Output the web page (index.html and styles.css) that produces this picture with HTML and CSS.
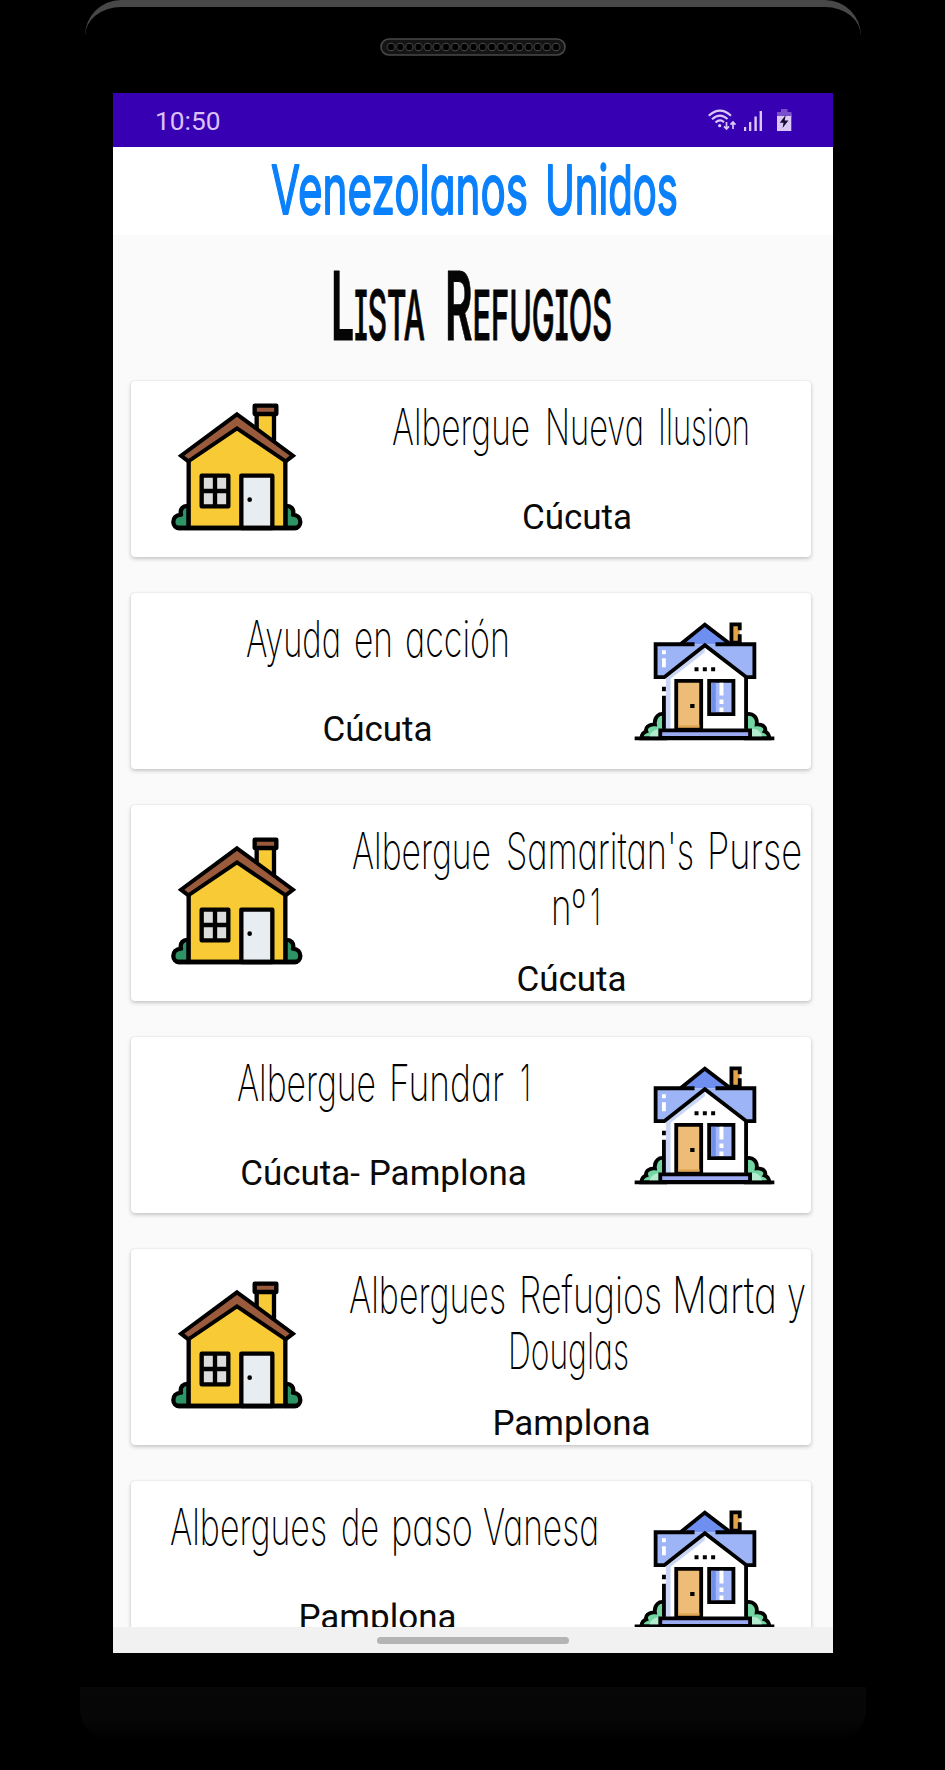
FILE: index.html
```html
<!DOCTYPE html>
<html lang="es">
<head>
<meta charset="utf-8">
<title>Venezolanos Unidos</title>
<link rel="stylesheet" href="styles.css">
</head>
<body>
<svg class="defs" width="0" height="0">
  <symbol id="house-yellow" viewBox="30 35 400 390">
    <g stroke="#000" stroke-width="13" stroke-linejoin="round" stroke-linecap="round">
      <path fill="#2f9465" d="M85 347C68 345 58 356 62 373C46 374 39 384 39 395C39 406 47 413 56 413H85ZM375 347C392 345 402 356 398 373C412 374 420 384 420 395C420 406 412 413 403 413H375Z"/>
      <path fill="#f7ca36" d="M289 70H341V170H289Z"/>
      <path fill="#f7ca36" d="M85 200L230 105L375 200V413H85Z"/>
      <path fill="#9a5a3c" d="M283 46H348V71H283Z"/>
      <path fill="#9a5a3c" stroke-width="12" stroke-linejoin="miter" d="M230 72L398 196L376 213L230 114L84 213L62 196Z"/>
      <path fill="#dcdcdc" d="M124 256H204V348H124ZM164 256V348M124 302H204"/>
      <path fill="#e8edf2" d="M243 256H336V413H243Z"/>
      <path fill="none" d="M52 413H408"/>
    </g>
    <circle cx="268" cy="328" r="7"/>
  </symbol>
  <symbol id="house-blue" viewBox="25 30 430 365">
    <g stroke="#000" stroke-width="11.5">
      <path fill="#72d6a2" d="M122 313C104 307 88 320 91 343C72 341 61 354 65 364C55 367 51 375 50 385H122ZM365 313C386 307 400 322 397 343C416 341 427 354 421 364C431 367 434 375 435 385H365Z"/>
      <path fill="#b5ecd0" stroke="none" d="M75 380C77 366 91 357 108 356V380ZM383 356C400 356 411 366 413 380H383Z"/>
      <path fill="#fff" stroke="none" d="M122 200L241 104L365 200V356H122Z"/>
      <path fill="#c9d6f5" stroke="none" d="M124 200L241 110V126L138 206V356H124Z"/>
      <path fill="#e3a348" d="M346 60V42H321V97H346V72"/>
      <path fill="#6f8ff0" d="M168 102L241 43L318 102" />
      <path fill="#9db5f6" stroke="none" d="M93 102H390V200H366L241 104L118 200H93Z"/>
      <path fill="none" d="M210 102H93V201H119L241 105L366 201H390V102H273"/>
      <path fill="none" d="M365 200V356M118 230V243M118 257V356"/>
      <path stroke="#fff" d="M118 120V132M118 144V171"/>
      <path fill="#edbd77" d="M155 212H230V358H155Z"/>
      <path stroke="#e0a550" stroke-width="7" d="M161 349H225"/>
      <path fill="#a6b9f8" d="M254 212H327V312H254Z"/>
      <path stroke="#7190ee" stroke-width="14" d="M267 218V306"/>
      <path stroke="#fff" stroke-width="12" d="M291 218V256M291 268V282M291 292V306"/>
      <path fill="#9caaf3" d="M107 361H377V384H107Z"/>
      <path d="M30 385H450"/>
      <path stroke-width="12" d="M210 177H222M235 177H247M260 177H272M197 288H210"/>
    </g>
  </symbol>
</svg>

<div class="phone">
  <div class="bezel">
    <svg class="speaker" width="186" height="18" viewBox="0 0 186 18">
      <defs><pattern id="hole" x="6.4" y="0" width="9.17" height="18" patternUnits="userSpaceOnUse"><circle cx="4.6" cy="9" r="3.7" fill="#000" stroke="#484848" stroke-width="1"/></pattern></defs>
      <rect x="1" y="1" width="184" height="16" rx="8" fill="#141414" stroke="#484848" stroke-width="1.6"/>
      <rect x="6.4" y="0" width="174.2" height="18" fill="url(#hole)"/>
    </svg>
  </div>
  <div class="screen">
    <div class="status">
      <span class="time">10:50</span>
      <span class="indicators">
        <svg class="wifi" width="28" height="22" viewBox="0 0 28 22" fill="none" stroke="#dcc8f7" stroke-width="2.2"><path d="M.8 6.8Q12 -3.4 23 6.8M4 10.2Q12 3 19.5 10M7.5 13.5Q12 9.6 16 13.2"/><circle cx="11.7" cy="16.7" r="1.6" fill="#dcc8f7" stroke="none"/><path d="M18.5 13V20M16 17.3L18.5 20L21 17.3M25 20V13M22.5 15.7L25 13L27.5 15.7" stroke-width="1.7"/></svg>
        <svg class="signal" width="19" height="20" viewBox="0 0 19 20" fill="#dcc8f7"><path d="M0 16H2.2V20H0ZM5 11H7.3V20H5ZM10.4 5.5H12.8V20H10.4ZM15.6 0H18V20H15.6Z"/></svg>
        <svg width="15" height="22" viewBox="0 0 15 22"><path fill="#7950cb" d="M4 0H10.5V3H14.3V8H0V3H4Z"/><path fill="#dcc8f7" d="M0 5H14.3V22H0Z"/><path fill="#7950cb" d="M0 3H14.3V7H0Z"/><path fill="#180b30" d="M8.7 6L2.8 13.7H6.5L5.6 19L11.4 11.5H7.7Z"/></svg>
      </span>
    </div>
    <header class="brand">
      <svg class="line" width="406" height="88"><text x="-1" y="67" textLength="257">Venezolanos</text><text x="273" y="67" textLength="133">Unidos</text></svg>
    </header>
    <main class="content">
      <h1 class="heading">
        <svg class="line" width="280" height="110"><text x="-1" y="88" textLength="94">L<tspan class="small">ISTA</tspan></text><text x="113" y="88" textLength="167">R<tspan class="small">EFUGIOS</tspan></text></svg>
      </h1>
      <section class="list">
        <article class="card">
          <svg class="house yellow"><use href="#house-yellow"/></svg>
          <div class="info">
            <div class="name shift-left"><svg class="line" width="357" height="56"><text x="-1" y="42" textLength="138">Albergue</text><text x="152" y="42" textLength="99">Nueva</text><text x="265" y="42" textLength="92">Ilusion</text></svg></div>
            <p class="city">Cúcuta</p>
          </div>
        </article>
        <article class="card flipped">
          <svg class="house blue"><use href="#house-blue"/></svg>
          <div class="info">
            <div class="name"><svg class="line" width="262" height="56"><text x="-1" y="42" textLength="95">Ayuda</text><text x="107" y="42" textLength="39">en</text><text x="158" y="42" textLength="105">acción</text></svg></div>
            <p class="city">Cúcuta</p>
          </div>
        </article>
        <article class="card tall">
          <svg class="house yellow"><use href="#house-yellow"/></svg>
          <div class="info">
            <div class="name"><svg class="line" width="449" height="56"><text x="-1" y="42" textLength="139">Albergue</text><text x="153" y="42" textLength="188">Samaritan's</text><text x="354" y="42" textLength="95">Purse</text></svg>
            <svg class="line" width="50" height="56"><text x="-1" y="42" textLength="35">nº</text><text x="38" y="42" textLength="11">1</text></svg></div>
            <p class="city shift-left">Cúcuta</p>
          </div>
        </article>
        <article class="card flipped">
          <svg class="house blue"><use href="#house-blue"/></svg>
          <div class="info">
            <div class="name shift-right"><svg class="line" width="294" height="56"><text x="0" y="42" textLength="139">Albergue</text><text x="152" y="42" textLength="115">Fundar</text><text x="283" y="42" textLength="11">1</text></svg></div>
            <p class="city shift-right">Cúcuta- Pamplona</p>
          </div>
        </article>
        <article class="card tall">
          <svg class="house yellow"><use href="#house-yellow"/></svg>
          <div class="info">
            <div class="name"><svg class="line" width="456" height="56"><text x="0" y="42" textLength="157">Albergues</text><text x="170" y="42" textLength="143">Refugios</text><text x="323" y="42" textLength="105">Marta</text><text x="438" y="42" textLength="19">y</text></svg>
            <svg class="line douglas" width="120" height="56"><text x="-1" y="42" textLength="121">Douglas</text></svg></div>
            <p class="city shift-left">Pamplona</p>
          </div>
        </article>
        <article class="card flipped">
          <svg class="house blue"><use href="#house-blue"/></svg>
          <div class="info">
            <div class="name shift-right"><svg class="line" width="428" height="56"><text x="0" y="42" textLength="157">Albergues</text><text x="171" y="42" textLength="38">de</text><text x="221" y="42" textLength="82">paso</text><text x="313" y="42" textLength="116">Vanesa</text></svg></div>
            <p class="city">Pamplona</p>
          </div>
        </article>
      </section>
    </main>
    <div class="navbar"><span class="pill"></span></div>
  </div>
  <div class="chin"></div>
</div>
<script src="text.js"></script>
</body>
</html>
```

FILE: text.js
```js
// Narrow lettering: fit each word to its length by condensing the glyphs.
document.querySelectorAll('.line text').forEach(function (word) {
  word.setAttribute('lengthAdjust', 'spacingAndGlyphs');
});
```

FILE: styles.css
```css
* { box-sizing: border-box; }
body { margin: 0; height: 1770px; background: #000; overflow: hidden; font-family: Roboto, "Liberation Sans", sans-serif; }
.defs { display: block; }
.phone { width: 776px; margin-left: 85px; display: flex; flex-direction: column; align-items: center; }
.bezel { width: 776px; height: 93px; border-top: 7px solid #484848; border-radius: 36px 36px 0 0; padding-top: 31px; text-align: center; }
.speaker { display: block; margin: 0 auto; }
.screen { width: 720px; height: 1560px; background: #fafafa; display: flex; flex-direction: column; }
.status { flex: none; height: 54px; background: #3700b3; display: flex; justify-content: space-between; align-items: center; padding: 0 41px 0 42px; color: #dcc0f7; }
.time { font-size: 26.3px; line-height: 54px; padding-top: 1px; }
.indicators { display: flex; align-items: center; }
.wifi { margin-right: 8px; }
.signal { margin-right: 14px; margin-top: 2px; }
.brand { flex: none; height: 88px; background: #fff; display: flex; justify-content: center; padding-left: 3px; }
.line { display: block; overflow: visible; font-family: Inter, "Liberation Sans", sans-serif; font-feature-settings: "cv11"; }
.brand .line { font-size: 68px; font-weight: 400; fill: #0a80fa; stroke: #0a80fa; stroke-width: 1.8; stroke-linejoin: round; }
.content { flex: 1; min-height: 0; overflow: hidden; }
.heading { height: 146px; margin: 0; padding: 17px 2px 0 0; display: flex; justify-content: center; }
.heading .line { font-size: 95px; font-weight: 600; font-feature-settings: "cv08"; fill: #050505; stroke: #050505; stroke-width: 1; stroke-linejoin: round; }
.heading .small { font-size: 69px; font-weight: 500; }
.list { display: flex; flex-direction: column; gap: 36px; padding: 0 22px 0 18px; }
.card { flex: none; height: 176px; background: #fff; border-radius: 4px; box-shadow: 0 2px 4px rgba(0,0,0,.2), 0 0 2px rgba(0,0,0,.1); display: flex; align-items: center; }
.card.tall { height: 196px; }
.card.flipped { flex-direction: row-reverse; }
.house { flex: none; display: block; }
.yellow { width: 134px; height: 130px; margin: 0 39px 5px 39px; }
.blue { width: 143px; height: 122px; margin: 0 35px 1px 9px; }
.info { flex: 1; align-self: stretch; padding-top: 22px; display: flex; flex-direction: column; align-items: center; }
.name { display: flex; flex-direction: column; align-items: center; }
.name .line { font-size: 50px; font-weight: 250; fill: #000; }
.city { margin: 37px 0 0; font-size: 35px; line-height: 44px; color: #0a0a0a; white-space: nowrap; }
.tall .city { margin-top: 19px; }
.shift-left { padding-right: 11px; }
.shift-right { padding-left: 12px; }
.douglas { margin-right: 17px; }
.navbar { flex: none; height: 26px; background: #f1f1f1; display: flex; justify-content: center; padding-top: 10px; }
.pill { width: 192px; height: 7px; border-radius: 4px; background: #b4b4b4; }
.chin { width: 786px; height: 54px; margin-top: 34px; border-radius: 0 0 32px 32px; background: linear-gradient(#070707, #060606 60%, #000); }
```
